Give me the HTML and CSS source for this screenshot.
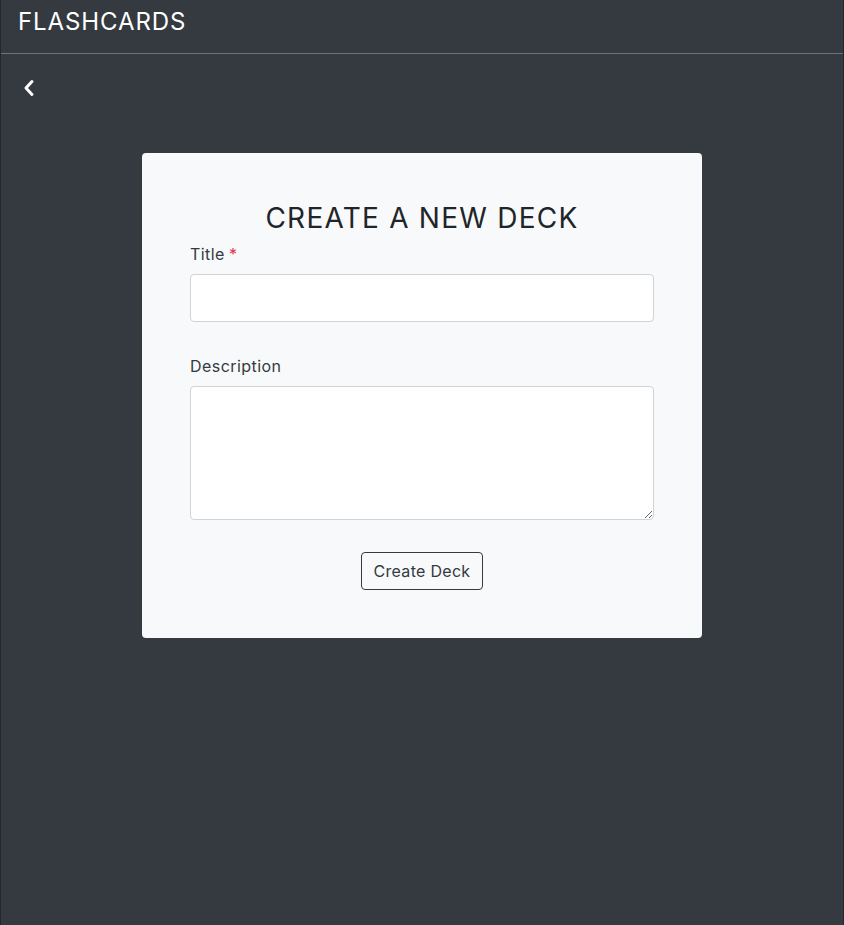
FILE: index.html
```html
<!DOCTYPE html>
<html lang="en">
<head>
<meta charset="utf-8">
<title>Flashcards</title>
<link rel="stylesheet" href="styles.css">
</head>
<body>
<div class="app">
  <header class="topbar">
    <span class="brand">FLASHCARDS</span>
  </header>
  <div class="back-row">
    <a class="back" href="#" aria-label="Back">
      <svg width="14" height="18" viewBox="0 0 14 18" aria-hidden="true">
        <polyline points="10,2.5 4,9 10,15.5" fill="none" stroke="#ffffff" stroke-width="3" stroke-linecap="round" stroke-linejoin="round"/>
      </svg>
    </a>
  </div>
  <main class="content">
    <form class="card">
      <h3 class="card-title">CREATE A NEW DECK</h3>
      <label class="field-label" for="title">Title<span class="req">*</span></label>
      <input class="field-input" id="title" type="text">
      <label class="field-label" for="desc">Description</label>
      <textarea class="field-textarea" id="desc"></textarea>
      <div class="actions">
        <button type="button" class="btn">Create Deck</button>
      </div>
    </form>
  </main>
</div>
</body>
</html>
```
FILE: styles.css
```css
* { box-sizing: border-box; }
html, body { margin: 0; padding: 0; height: 100%; }
body {
  background: #343a40;
  font-family: "Inter", "Liberation Sans", sans-serif;
  color: #212529;
}
.app {
  min-height: 100vh;
  background: #343a40;
  border-left: 1px solid #23272b;
  border-right: 1px solid #23272b;
}
.topbar {
  height: 54px;
  padding: 8px 17px 0;
  border-bottom: 1px solid #6c737a;
}
.brand {
  display: block;
  color: #ffffff;
  font-size: 24px;
  line-height: 28.8px;
  letter-spacing: 0.9px;
}
.back-row {
  padding: 25px 0 0 21px;
  height: 99px;
}
.back {
  display: inline-block;
  line-height: 0;
}
.content {
  display: flex;
  justify-content: center;
}
.card {
  width: 560px;
  padding: 48px;
  background: #f8f9fa;
  border-radius: 4px;
  display: flex;
  flex-direction: column;
}
.card-title {
  margin: 0 0 7px;
  font-size: 28px;
  line-height: 34px;
  font-weight: 400;
  letter-spacing: 1.25px;
  text-align: center;
  color: #212529;
}
.field-label {
  display: block;
  font-size: 16px;
  line-height: 24px;
  margin-bottom: 8px;
  letter-spacing: 0.45px;
  color: #343a40;
}
.req {
  color: #dc3545;
  margin-left: 4px;
}
.field-input,
.field-textarea {
  display: block;
  width: 100%;
  background: #ffffff;
  border: 1px solid #ced4da;
  border-radius: 4px;
  font-family: inherit;
  font-size: 20px;
  margin: 0 0 32px;
}
.field-input { height: 48px; }
.field-textarea { height: 134px; resize: vertical; }
.actions {
  display: flex;
  justify-content: center;
}
.btn {
  height: 38px;
  padding: 0 12px;
  border: 1px solid #343a40;
  border-radius: 4px;
  background: transparent;
  color: #343a40;
  font-family: inherit;
  font-size: 16px;
  letter-spacing: 0.3px;
  cursor: pointer;
}
```
